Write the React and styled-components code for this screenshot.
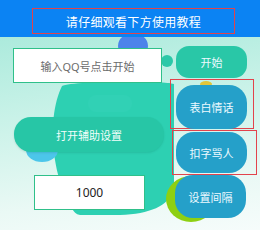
import React from "react";
import styled, { createGlobalStyle } from "styled-components";

const GlobalStyle = createGlobalStyle`
  body {
    margin: 0;
    font-family: "Noto Sans CJK SC", "Noto Sans", sans-serif;
  }
`;

const Screen = styled.div`
  position: relative;
  width: 260px;
  height: 230px;
  overflow: hidden;
  background: linear-gradient(172deg, #9fe7d7 0%, #c9f2e8 45%, #eaf9f5 80%, #f6fcfb 100%);
`;

const Backdrop = styled.svg`
  position: absolute;
  left: 0;
  top: 0;
  z-index: 0;
`;

const Header = styled.div`
  position: relative;
  z-index: 1;
  height: 37px;
  background: #0b83f3;
  box-sizing: border-box;
  padding: 8px 0 0 32px;
`;

const TitleFrame = styled.div`
  width: 203px;
  height: 26px;
  box-sizing: border-box;
  border: 1.5px solid #e2434c;
  display: flex;
  align-items: center;
  justify-content: center;
  color: #ffffff;
  font-size: 12px;
  letter-spacing: 0.3px;
`;

const Body = styled.div`
  position: relative;
  z-index: 1;
  display: flex;
`;

const LeftCol = styled.div`
  width: 170px;
  display: flex;
  flex-direction: column;
  padding: 11px 0 0 13px;
  box-sizing: border-box;
`;

const RightCol = styled.div`
  display: flex;
  flex-direction: column;
  align-items: flex-start;
`;

const Field = styled.div`
  width: ${(p) => p.$w}px;
  height: 35px;
  margin: ${(p) => p.$m || "0"};
  box-sizing: border-box;
  background: #ffffff;
  border: 1.5px solid #2fc08a;
  display: flex;
  align-items: center;
  justify-content: center;
  font-size: ${(p) => p.$fs || 11}px;
  color: ${(p) => p.$c || "#6b6b6b"};
  font-family: "Noto Sans", "Noto Sans CJK SC", sans-serif;
`;

const WideButton = styled.div`
  width: 150px;
  height: 35px;
  margin: 34px 0 0 1px;
  border-radius: 17px;
  background: #27c6a6;
  box-shadow: 0 1px 2px rgba(0, 90, 70, 0.15);
  display: flex;
  align-items: center;
  justify-content: center;
  color: #f2fffb;
  font-size: 11px;
`;

const Pill = styled.div`
  width: 71px;
  height: ${(p) => p.$h}px;
  margin: ${(p) => p.$m || "0"};
  border-radius: ${(p) => p.$r}px;
  background: ${(p) => (p.$teal ? "#29c7a7" : "#25a0c9")};
  display: flex;
  align-items: center;
  justify-content: center;
  color: #eefaff;
  font-size: 11px;
  flex-shrink: 0;
`;

const Highlight = styled.div`
  width: ${(p) => p.$w}px;
  height: ${(p) => p.$h}px;
  margin: ${(p) => p.$m || "0"};
  box-sizing: border-box;
  border: 1.5px solid #e2434c;
  padding: ${(p) => p.$p};
  display: flex;
`;

export default function App() {
  return (
    <>
      <GlobalStyle />
      <Screen>
        <Backdrop width="260" height="230" viewBox="0 0 260 230">
          <ellipse cx="133" cy="46" rx="15" ry="13" fill="#4c84ea" />
          <circle cx="167" cy="61" r="6" fill="#2cc8a8" />
          <path
            d="M62 86 C 72 81, 160 80, 174 84 L 174 190 C 168 206, 150 214, 120 215 L 80 215 C 72 214, 71 205, 67 195 C 60 185, 57 172, 55 160 C 50 130, 54 102, 62 86 Z"
            fill="#2dd0b2"
          />
          <rect x="88" y="95" width="44" height="17" rx="8" fill="#31d1b5" />
          <ellipse cx="42" cy="150" rx="16" ry="12" fill="#4cc6ea" />
          <ellipse cx="206" cy="84" rx="6" ry="3" fill="#e2c638" />
          <ellipse cx="191" cy="199" rx="25" ry="23" fill="#8ed012" />
        </Backdrop>
        <Header>
          <TitleFrame>请仔细观看下方使用教程</TitleFrame>
        </Header>
        <Body>
          <LeftCol>
            <Field $w={149}>输入QQ号点击开始</Field>
            <WideButton>打开辅助设置</WideButton>
            <Field $w={111} $m="23px 0 0 21px" $fs={12} $c="#222">
              1000
            </Field>
          </LeftCol>
          <RightCol>
            <Pill $teal $h={32} $r={13} $m="9px 0 0 6px">
              开始
            </Pill>
            <Highlight $w={84} $h={50} $p="5px 0 0 5px" $m="1px 0 0 0">
              <Pill $h={44} $r={18}>表白情话</Pill>
            </Highlight>
            <Highlight $w={85} $h={45} $p="1px 0 0 3px" $m="1px 0 0 2px">
              <Pill $h={41} $r={18}>扣字骂人</Pill>
            </Highlight>
            <Pill $h={43} $r={18} $m="0 0 0 5px">
              设置间隔
            </Pill>
          </RightCol>
        </Body>
      </Screen>
    </>
  );
}
